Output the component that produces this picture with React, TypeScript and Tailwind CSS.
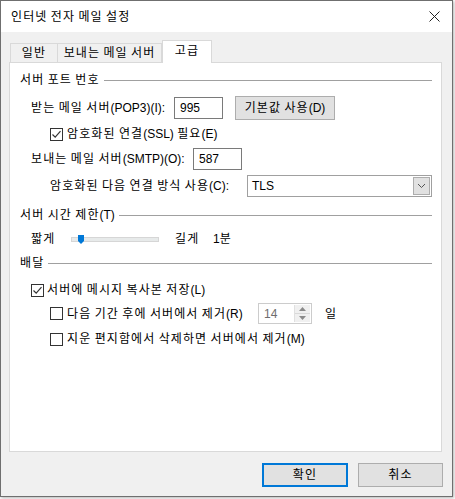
import React from 'react'

const font = { fontFamily: '"Liberation Sans", "Noto Sans CJK KR", sans-serif' }

// Hangul glyphs come out narrower than in the original font, so runs of Hangul get extra tracking
function T({ s }: { s: string }) {
  const parts = s.split(/([\uAC00-\uD7A3]+)/)
  return (
    <span className="whitespace-pre">
      {parts.map((p, i) =>
        /[\uAC00-\uD7A3]/.test(p) ? (
          <span key={i} className="tracking-[1.1px]">{p}</span>
        ) : (
          <span key={i}>{p}</span>
        )
      )}
    </span>
  )
}

function CheckBox({ checked }: { checked?: boolean }) {
  return (
    <span className="w-[13px] h-[13px] border border-[#333] bg-white flex items-center justify-center shrink-0">
      {checked && (
        <svg width="11" height="11" viewBox="0 0 11 11">
          <path d="M1.5 5.5 L4.2 8.2 L9.5 2.2" fill="none" stroke="#333" strokeWidth="1.2" />
        </svg>
      )}
    </span>
  )
}

function Section({ label }: { label: string }) {
  return (
    <div className="flex items-center h-[16px] pl-[10px] pr-[9px]">
      <T s={label} />
      <div className="flex-1 h-px bg-[#a0a0a0] ml-[4px]" />
    </div>
  )
}

export default function App() {
  return (
    <div className="w-[455px] h-[499px] bg-white text-[12px] text-black leading-[16px]" style={font}>
      <div className="w-[453px] h-[497px] border border-[#6f6f6f] shadow-[1px_1px_3px_rgba(0,0,0,0.3)] flex flex-col">
        {/* title bar */}
        <div className="h-[31px] bg-white flex items-center justify-between pl-[10px] pr-[12px] shrink-0">
          <T s="인터넷 전자 메일 설정" />
          <svg width="11" height="11" viewBox="0 0 11 11">
            <path d="M0.5 0.5 L10.5 10.5 M10.5 0.5 L0.5 10.5" stroke="#222" strokeWidth="1" />
          </svg>
        </div>

        <div className="flex-1 bg-[#f0f0f0] pl-[8px] pt-[8px] flex flex-col">
          {/* tabs */}
          <div className="flex items-end h-[22px] ml-[1px]">
            <div className="w-[48px] h-[19px] border border-b-0 border-[#d9d9d9] bg-[#f0f0f0] flex items-center justify-center">
              <T s="일반" />
            </div>
            <div className="w-[104px] h-[19px] border border-b-0 border-l-0 border-[#d9d9d9] bg-[#f0f0f0] flex items-center justify-center">
              <T s="보내는 메일 서버" />
            </div>
            <div className="relative z-10 w-[50px] h-[23px] -mb-px border border-b-0 border-[#d9d9d9] bg-white flex items-start pt-[2px] justify-center">
              <T s="고급" />
            </div>
          </div>

          {/* panel */}
          <div className="w-[433px] h-[390px] border border-[#d9d9d9] bg-white flex flex-col pt-[9px]">
            <Section label="서버 포트 번호" />

            <div className="flex items-center h-[24px] mt-[8px] pl-[21px]">
              <span className="w-[143px]"><T s="받는 메일 서버(POP3)(I):" /></span>
              <div className="w-[49px] h-[22px] border border-[#7a7a7a] flex items-center px-[5px]">995</div>
              <div className="ml-[12px] w-[100px] h-[24px] border border-[#adadad] bg-[#e1e1e1] flex items-center justify-center">
                <T s="기본값 사용(D)" />
              </div>
            </div>

            <div className="flex items-center gap-[4px] h-[16px] mt-[6px] pl-[40px]">
              <CheckBox checked />
              <T s="암호화된 연결(SSL) 필요(E)" />
            </div>

            <div className="flex items-center h-[22px] mt-[6px] pl-[21px]">
              <span className="w-[162px]"><T s="보내는 메일 서버(SMTP)(O):" /></span>
              <div className="w-[49px] h-[22px] border border-[#7a7a7a] flex items-center px-[5px]">587</div>
            </div>

            <div className="flex items-center h-[22px] mt-[5px] pl-[40px]">
              <span className="w-[197px]"><T s="암호화된 다음 연결 방식 사용(C):" /></span>
              <div className="w-[185px] h-[22px] border border-[#a0a0a0] flex items-center justify-between pl-[4px] pr-[1px]">
                <span>TLS</span>
                <div className="w-[17px] h-[18px] border border-[#adadad] bg-[#e1e1e1] flex items-center justify-center">
                  <svg width="9" height="6" viewBox="0 0 9 6">
                    <path d="M1 1 L4.5 4.5 L8 1" fill="none" stroke="#555" strokeWidth="1" />
                  </svg>
                </div>
              </div>
            </div>

            <div className="mt-[10px]">
              <Section label="서버 시간 제한(T)" />
            </div>

            <div className="flex items-center h-[16px] mt-[8px] pl-[21px]">
              <span className="w-[40px]"><T s="짧게" /></span>
              <div className="relative w-[88px] h-[5px] bg-[#e7eaea] border border-[#d6d6d6]">
                <svg className="absolute left-[6px] -top-[3px]" width="6" height="9" viewBox="0 0 6 9">
                  <path d="M0 0 H6 V6 L3 9 L0 6 Z" fill="#0078d7" />
                </svg>
              </div>
              <span className="ml-[16px] w-[38px]"><T s="길게" /></span>
              <T s="1분" />
            </div>

            <div className="mt-[8px]">
              <Section label="배달" />
            </div>

            <div className="flex items-center gap-[3px] h-[16px] mt-[11px] pl-[21px]">
              <CheckBox checked />
              <T s="서버에 메시지 복사본 저장(L)" />
            </div>

            <div className="flex items-center h-[21px] mt-[5px] pl-[40px]">
              <CheckBox />
              <span className="ml-[4px] w-[191px]"><T s="다음 기간 후에 서버에서 제거(R)" /></span>
              <div className="w-[54px] h-[21px] border border-[#cccccc] flex items-center justify-between pl-[5px] pr-[1px] text-[#6d6d6d]">
                <span>14</span>
                <div className="w-[16px] h-[17px] flex flex-col border-l border-[#e0e0e0]">
                  <div className="flex-1 bg-[#f0f0f0] border-b border-[#d9d9d9] flex items-center justify-center">
                    <svg width="7" height="4" viewBox="0 0 7 4"><path d="M0 4 L3.5 0 L7 4 Z" fill="#8a8a8a" /></svg>
                  </div>
                  <div className="flex-1 bg-[#f0f0f0] flex items-center justify-center">
                    <svg width="7" height="4" viewBox="0 0 7 4"><path d="M0 0 L3.5 4 L7 0 Z" fill="#8a8a8a" /></svg>
                  </div>
                </div>
              </div>
              <span className="ml-[13px]"><T s="일" /></span>
            </div>

            <div className="flex items-center gap-[4px] h-[16px] mt-[7px] pl-[40px]">
              <CheckBox />
              <T s="지운 편지함에서 삭제하면 서버에서 제거(M)" />
            </div>
          </div>

          {/* buttons */}
          <div className="flex justify-end gap-[10px] mt-[11px] pr-[9px]">
            <div className="w-[86px] h-[24px] border-2 border-[#0078d7] bg-[#e1e1e1] flex items-center justify-center">
              <T s="확인" />
            </div>
            <div className="w-[85px] h-[24px] border border-[#adadad] bg-[#e1e1e1] flex items-center justify-center">
              <T s="취소" />
            </div>
          </div>
        </div>
      </div>
    </div>
  )
}
